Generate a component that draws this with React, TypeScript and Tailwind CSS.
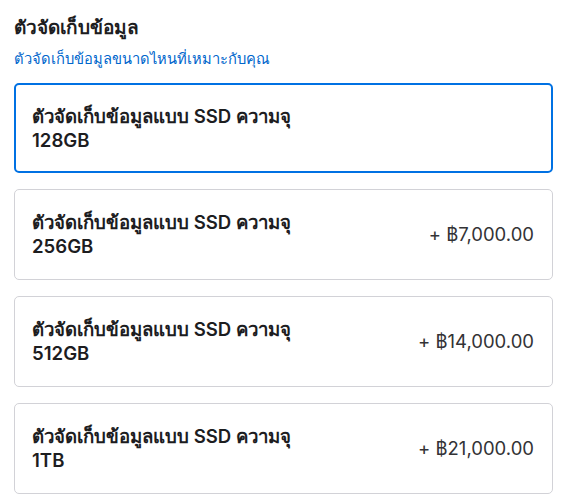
const options = [
  { size: "128GB", price: null, selected: true },
  { size: "256GB", price: "+ ฿7,000.00", selected: false },
  { size: "512GB", price: "+ ฿14,000.00", selected: false },
  { size: "1TB", price: "+ ฿21,000.00", selected: false },
];

export default function App() {
  return (
    <div
      className="w-[566px] h-[504px] bg-white px-[14px] pt-[13px] text-[#1d1d1f]"
      style={{ fontFamily: 'Inter, "Noto Sans", sans-serif' }}
    >
      <h2 className="text-[19px] font-semibold leading-[30px]">ตัวจัดเก็บข้อมูล</h2>
      <p className="text-[14.7px] text-[#0066cc] leading-[24px] mt-[4px]">
        ตัวจัดเก็บข้อมูลขนาดไหนที่เหมาะกับคุณ
      </p>
      <div className="mt-[12px] flex flex-col gap-[16px] w-[539px]">
        {options.map((o) => (
          <div
            key={o.size}
            className={
              o.selected
                ? "h-[90px] rounded-[5px] border-2 border-[#0071e3] pl-[16px] pr-[17px] flex items-center justify-between"
                : "h-[91px] rounded-[5px] border border-[#d2d2d7] pl-[17px] pr-[18px] flex items-center justify-between"
            }
          >
            <div className="text-[18.6px] font-semibold leading-[24px] -mt-[1px]">
              <div>ตัวจัดเก็บข้อมูลแบบ SSD ความจุ</div>
              <div>{o.size}</div>
            </div>
            {o.price && <div className="text-[18.5px] text-[#333336]">{o.price}</div>}
          </div>
        ))}
      </div>
    </div>
  );
}
